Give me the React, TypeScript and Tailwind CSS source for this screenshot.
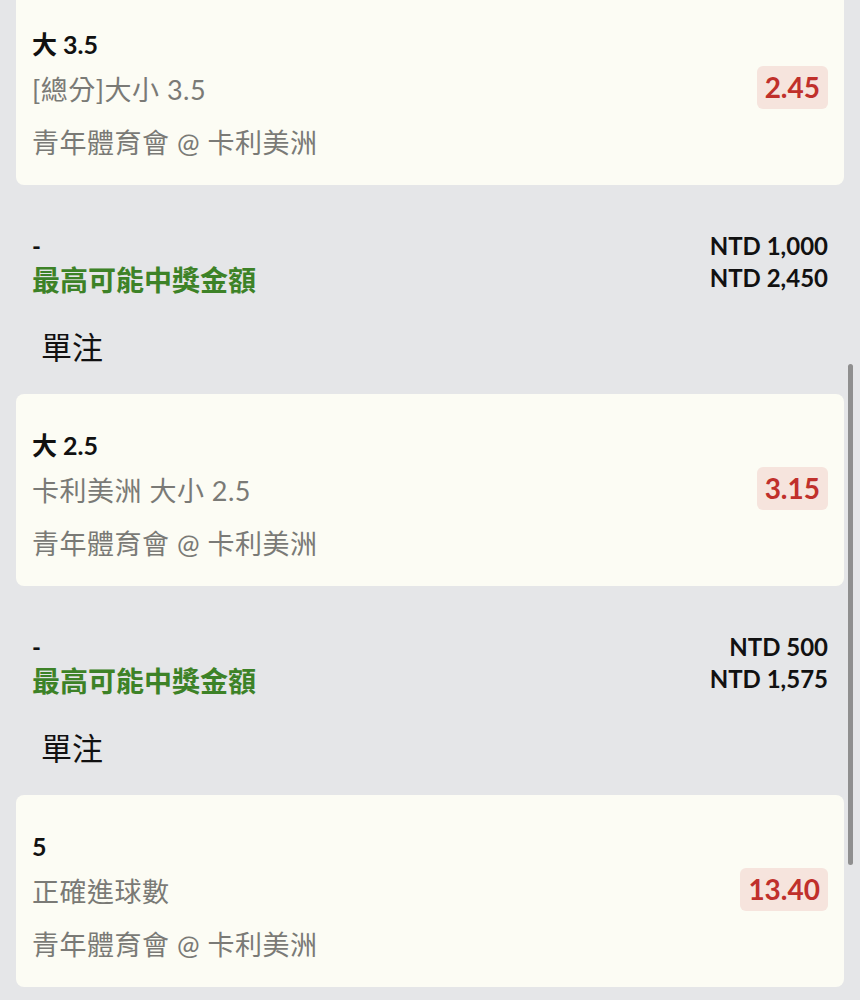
const bets = [
  {
    pick: "大 3.5",
    market: "[總分]大小 3.5",
    match: "青年體育會 @ 卡利美洲",
    odds: "2.45",
    stake: "NTD 1,000",
    payout: "NTD 2,450",
  },
  {
    pick: "大 2.5",
    market: "卡利美洲 大小 2.5",
    match: "青年體育會 @ 卡利美洲",
    odds: "3.15",
    stake: "NTD 500",
    payout: "NTD 1,575",
  },
  {
    pick: "5",
    market: "正確進球數",
    match: "青年體育會 @ 卡利美洲",
    odds: "13.40",
    stake: "",
    payout: "",
  },
];

const font = "font-['Lato','Noto_Sans_CJK_TC',sans-serif]";

function BetCard({ bet }: { bet: (typeof bets)[number] }) {
  return (
    <div className="flex items-center justify-between rounded-lg bg-[#fcfcf4] px-4 py-[22px]">
      <div className="mt-[13px] flex flex-col">
        <div className="text-[25px] font-bold leading-[32px] text-[#111]">
          {bet.pick}
        </div>
        <div className="mt-[10px] text-[27px] leading-[40px] tracking-[0.5px] text-[#7a7a76]">
          {bet.market}
        </div>
        <div className="mt-[13px] text-[27px] leading-[40px] tracking-[0.5px] text-[#7a7a76]">
          {bet.match}
        </div>
      </div>
      <div className="-mt-[4px] rounded-md bg-[#f6e4dd] px-2 py-[4px] text-[28px] font-bold leading-[35px] text-[#c0302b]">
        {bet.odds}
      </div>
    </div>
  );
}

function Summary({ stake, payout }: { stake: string; payout: string }) {
  return (
    <div className="mt-[45px] flex justify-between px-4">
      <div className="flex flex-col">
        <div className="text-[24px] font-bold leading-[32px] text-[#111]">-</div>
        <div className="text-[28px] font-bold leading-[36px] text-[#3d8227]">
          最高可能中獎金額
        </div>
      </div>
      <div className="flex flex-col items-end text-[24px] font-bold leading-[32px] text-[#111]">
        <div>{stake}</div>
        <div>{payout}</div>
      </div>
    </div>
  );
}

export default function App() {
  return (
    <div className={`relative min-h-screen overflow-hidden bg-[#e5e6e8] ${font}`}>
      <div className="-mt-[7px] flex flex-col px-4">
        {bets.map((bet, i) => (
          <div key={i} className="flex flex-col">
            <BetCard bet={bet} />
            {bet.stake && (
              <>
                <Summary stake={bet.stake} payout={bet.payout} />
                <div className="mt-[29px] mb-[27px] pl-[25px] text-[31px] leading-[40px] text-[#111]">
                  單注
                </div>
              </>
            )}
          </div>
        ))}
      </div>
      {/* scrollbar thumb */}
      <div className="absolute top-[364px] left-[848px] h-[501px] w-[5px] rounded-full bg-[#8f8f8f]" />
    </div>
  );
}
